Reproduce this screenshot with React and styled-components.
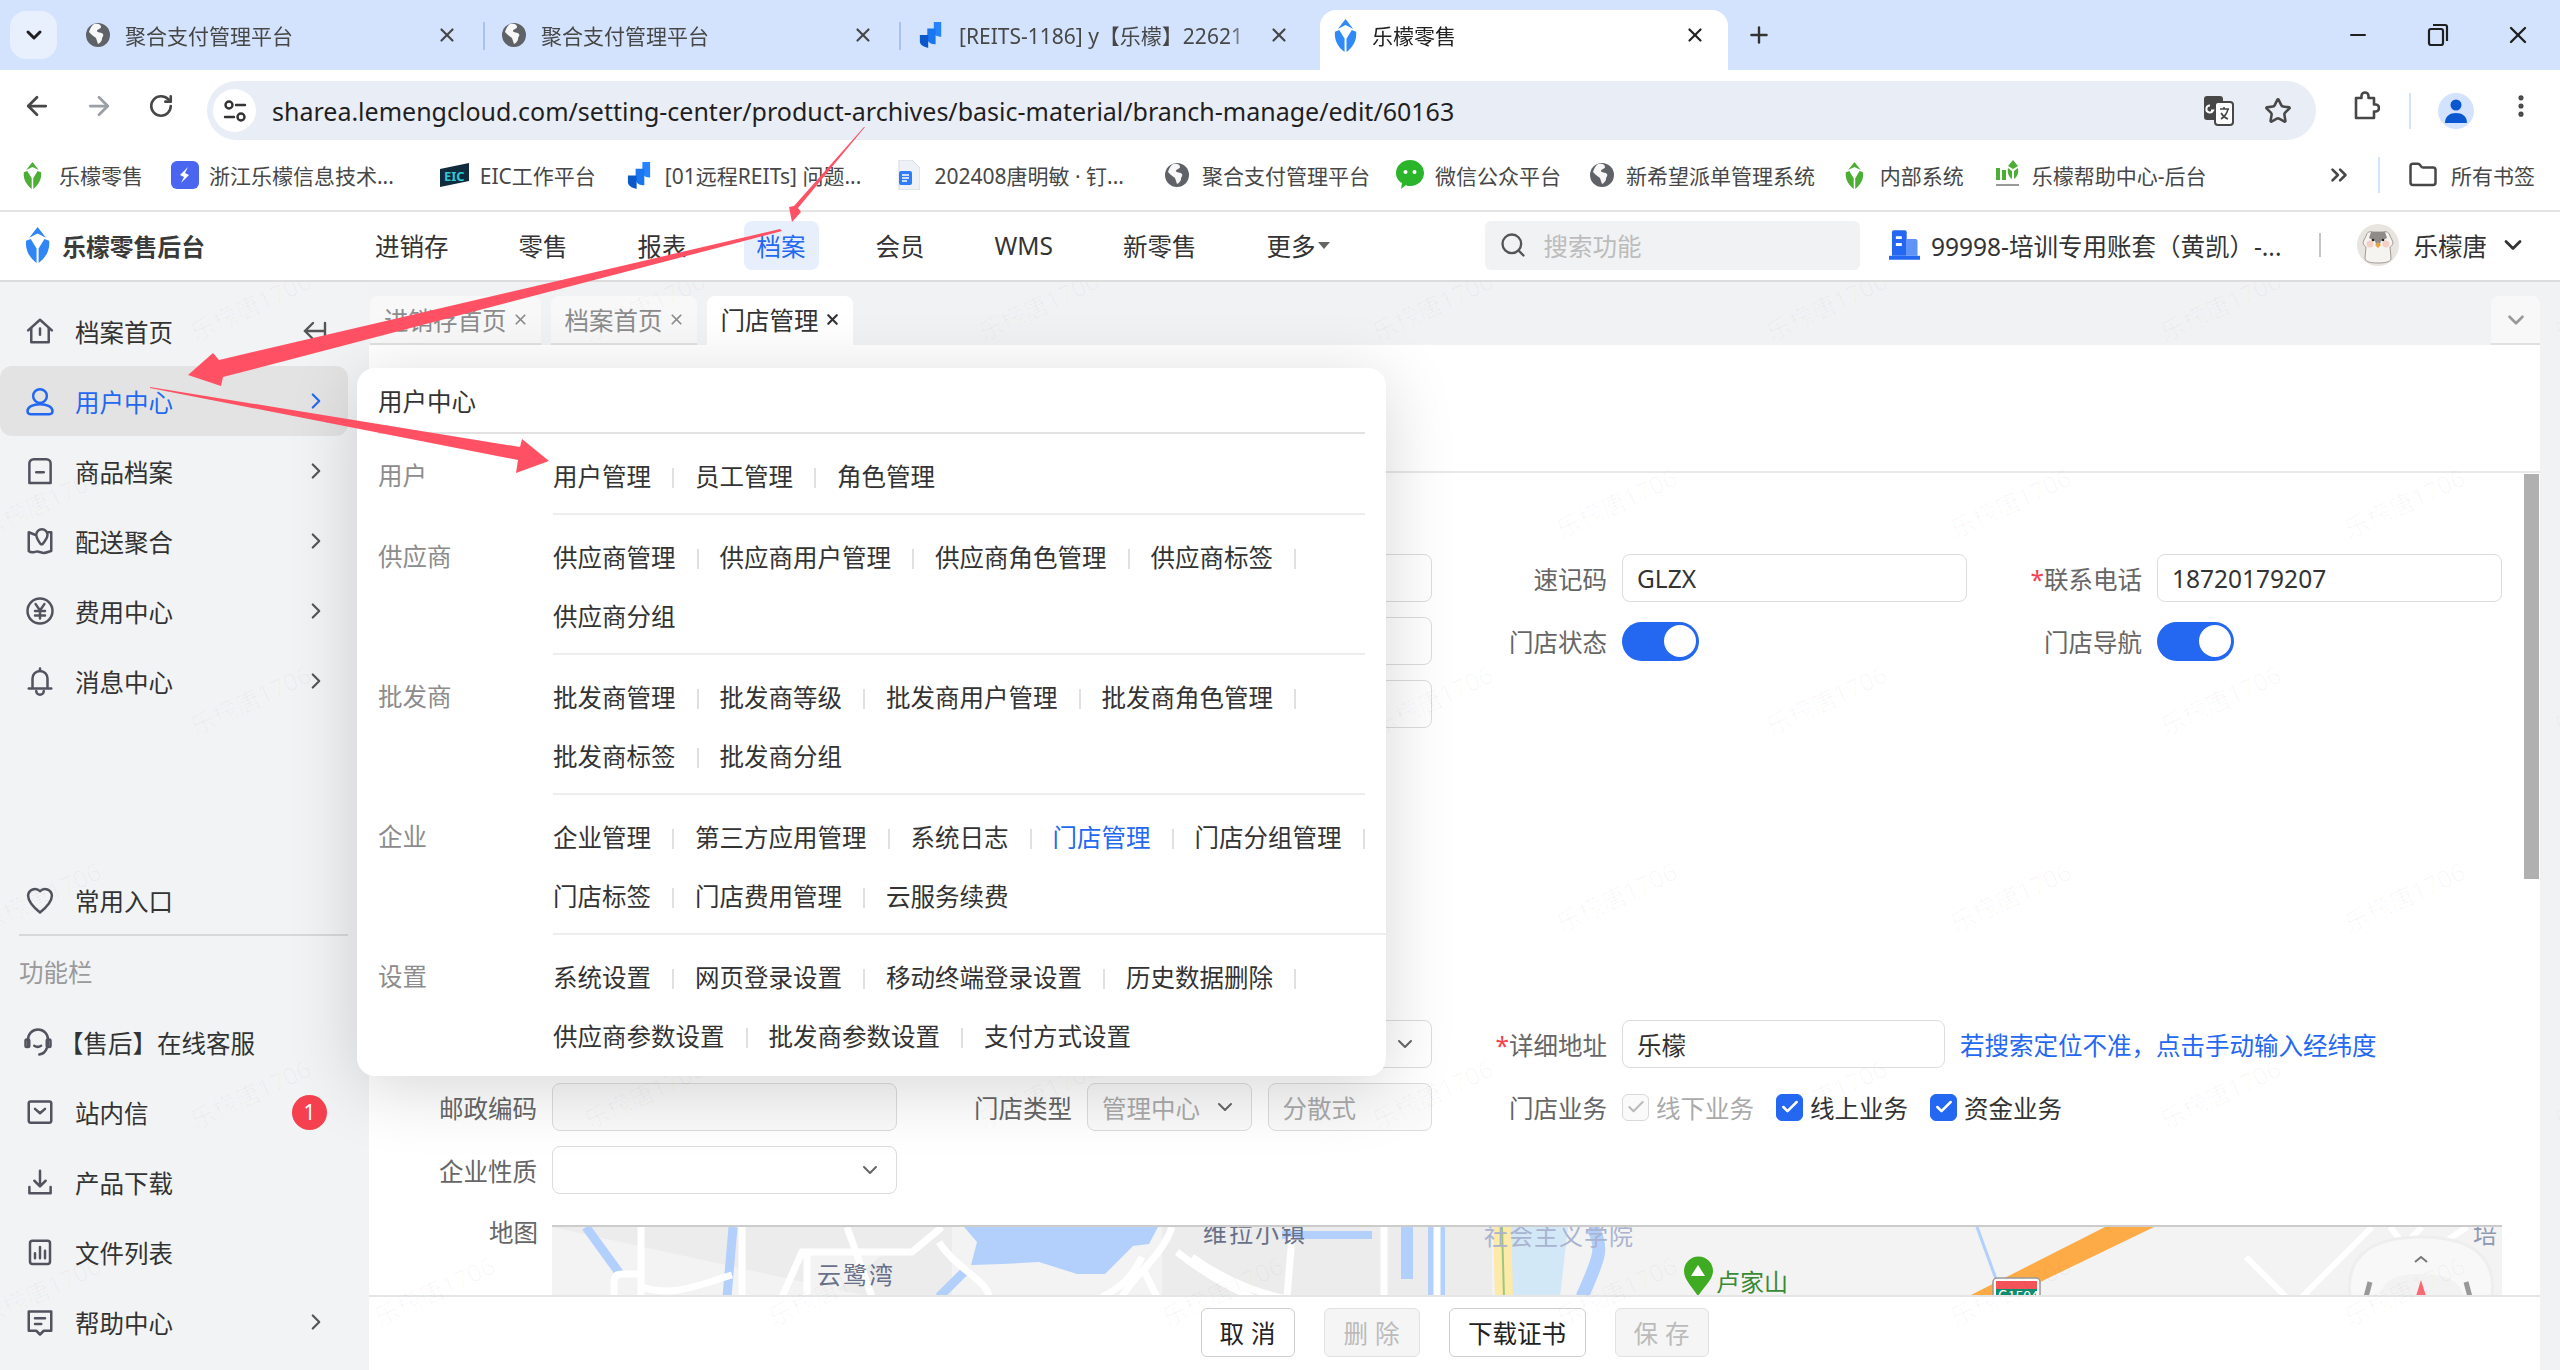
import React from 'react';
import styled, { createGlobalStyle } from 'styled-components';
import { ChevronDown, ChevronRight, ChevronsRight, Minus, Plus, RotateCw, Search, Star, X, ArrowLeft, ArrowRight, MoreVertical, Folder, Check } from 'lucide-react';

const BLUE = '#2468f2';

const GlobalStyle = createGlobalStyle`
  html, body { margin: 0; height: 100%; background: #f1f2f4; }
  body { font-family: "Noto Sans", "Noto Sans CJK SC", sans-serif; color: #333; overflow: hidden; }
  * { box-sizing: border-box; }
`;

const Page = styled.div`
  position: relative;
  display: flex;
  flex-direction: column;
  height: 1370px;
  overflow: hidden;
`;

/* browser chrome */
const TabStrip = styled.div`
  display: flex;
  align-items: flex-end;
  height: 70px;
  background: #d3e3fd;
  flex: none;
`;

const TabMenu = styled.div`
  display: flex;
  align-items: center;
  justify-content: center;
  align-self: flex-start;
  width: 47px;
  height: 48px;
  margin: 11px 15px 0 10px;
  border-radius: 16px;
  background: #e8f0fe;
  color: #1f1f1f;
`;

const BrowserTab = styled.div`
  position: relative;
  display: flex;
  align-items: center;
  gap: 15px;
  width: 408px;
  height: 60px;
  margin-right: 8px;
  padding: 0 22px 10px 14px;
  border-radius: 16px 16px 0 0;
  font-size: 21px;
  color: ${p => (p.$active ? '#222' : '#474747')};
  background: ${p => (p.$active ? '#fff' : 'transparent')};

  &::after {
    content: '';
    display: ${p => (p.$sep ? 'block' : 'none')};
    position: absolute;
    right: -5px;
    top: 12px;
    width: 2px;
    height: 28px;
    background: #a8c2ea;
  }
`;

const TabTitle = styled.span`
  flex: 1;
  min-width: 0;
  overflow: hidden;
  white-space: nowrap;
  mask-image: linear-gradient(to right, #000 92%, transparent);
`;

const NewTab = styled.div`
  display: flex;
  align-items: center;
  justify-content: center;
  align-self: center;
  width: 40px;
  margin-left: 3px;
  color: #333;
`;

const WindowControls = styled.div`
  display: flex;
  align-self: center;
  margin-left: auto;
  margin-right: 2px;
`;

const WindowButton = styled.div`
  display: flex;
  align-items: center;
  justify-content: center;
  width: 80px;
  color: #1f1f1f;
`;

const Toolbar = styled.div`
  display: flex;
  align-items: center;
  height: 71px;
  padding-left: 6px;
  background: #fff;
  flex: none;
`;

const ToolButton = styled.div`
  display: flex;
  align-items: center;
  justify-content: center;
  width: 62px;
  color: ${p => p.$color || '#474747'};
`;

const UrlBar = styled.div`
  display: flex;
  align-items: center;
  width: 2109px;
  height: 59px;
  margin: 10px 19px 0 15px;
  border-radius: 30px;
  background: #e9edf6;
`;

const SiteChip = styled.div`
  display: flex;
  align-items: center;
  justify-content: center;
  width: 43px;
  height: 43px;
  margin: 0 16px 0 6px;
  border-radius: 50%;
  background: #fff;
`;

const UrlText = styled.span`
  flex: 1;
  font-family: "Noto Sans", sans-serif;
  font-size: 25px;
  color: #1f1f1f;
  white-space: nowrap;
`;

const UrlIcons = styled.div`
  display: flex;
  align-items: center;
  gap: 30px;
  margin-right: 24px;
  color: #474747;
`;

const ToolSep = styled.div`
  width: 2px;
  height: 36px;
  margin: 10px 27px 0 12px;
  background: #d3e3fd;
`;

const BookmarkSep = styled(ToolSep)`
  margin: 0 28px 0 26px;
`;

const Profile = styled.div`
  display: flex;
  align-items: center;
  justify-content: center;
  width: 36px;
  height: 36px;
  margin: 10px 16px 0 0;
  border-radius: 50%;
  background: #d3e3fd;
`;

const Bookmarks = styled.div`
  display: flex;
  align-items: center;
  height: 71px;
  padding: 0 0 1px 23px;
  background: #fff;
  border-bottom: 2px solid #e3e3e3;
  flex: none;
`;

const Bookmark = styled.div`
  display: flex;
  align-items: center;
  gap: ${p => p.$gap || 12}px;
  margin-right: ${p => p.$mr || 30}px;
  font-size: 21px;
  color: #474747;
  white-space: nowrap;
`;

const BookmarkEnd = styled.div`
  display: flex;
  align-items: center;
  margin-left: auto;
  padding-right: 25px;
  font-size: 21px;
  color: #474747;
  white-space: nowrap;
`;

const FolderIcon = styled(Folder)`
  margin-right: 13px;
`;

/* app header */
const AppHeader = styled.header`
  display: flex;
  align-items: center;
  height: 70px;
  padding: 0 33px 2px 25px;
  background: #fff;
  border-bottom: 2px solid #dcdcdc;
  flex: none;
`;

const Brand = styled.div`
  display: flex;
  align-items: center;
  gap: 12px;
  width: 337px;
  font-size: 23.8px;
  font-weight: 700;
  color: #3a3a3a;
  white-space: nowrap;
`;

const Nav = styled.nav`
  display: flex;
  align-items: center;
  gap: 44px;
  flex: 1;
`;

const NavItem = styled.div`
  display: flex;
  align-items: center;
  height: 49px;
  padding: 0 13px;
  border-radius: 8px;
  font-size: 24.5px;
  color: ${p => (p.$active ? BLUE : '#333')};
  background: ${p => (p.$active ? '#e8effc' : 'transparent')};
  white-space: nowrap;
`;

const Caret = styled.span`
  width: 0;
  height: 0;
  margin: 0 0 0 3px;
  border-left: 6px solid transparent;
  border-right: 6px solid transparent;
  border-top: 7px solid #666;
`;

const SearchBox = styled.div`
  display: flex;
  align-items: center;
  gap: 17px;
  width: 375px;
  height: 49px;
  padding-left: 14px;
  border-radius: 6px;
  background: #f1f2f4;
  color: #bcbcbc;
  font-size: 24.5px;
  svg { color: #555; }
`;

const Account = styled.div`
  display: flex;
  align-items: center;
  gap: 11px;
  width: 393px;
  margin-left: 29px;
  font-size: 24.5px;
  color: #333;
  white-space: nowrap;
`;

const HeaderSep = styled.div`
  width: 2px;
  height: 24px;
  margin: 0 36px 0 37px;
  background: #c4c4c4;
`;

const UserName = styled.div`
  display: flex;
  align-items: center;
  gap: 15px;
  font-size: 24.5px;
  color: #333;
  svg:last-child { margin-left: -3px; }
`;

/* main */
const Main = styled.main`
  position: relative;
  display: flex;
  flex: 1;
  min-height: 0;
`;

const Sidebar = styled.aside`
  display: flex;
  flex-direction: column;
  width: 369px;
  padding: 14px 21px 13px 0;
  background: #f2f3f5;
  flex: none;
`;

const SideItem = styled.div`
  display: flex;
  align-items: center;
  gap: ${p => p.$gap ?? 20}px;
  height: 70px;
  padding: 0 19px 0 ${p => p.$pl ?? 25}px;
  border-radius: 12px;
  font-size: 24.5px;
  color: ${p => (p.$active ? BLUE : '#333')};
  background: ${p => (p.$active ? '#e3e3e4' : 'transparent')};
  white-space: nowrap;
  svg.lead { color: ${p => (p.$active ? BLUE : '#51535f')}; flex: none; }
`;

const SideText = styled.span`
  flex: 1;
`;

const SideMore = styled(ChevronRight)`
  color: ${p => (p.$active ? BLUE : '#555')};
`;

const Badge = styled.span`
  display: flex;
  align-items: center;
  justify-content: center;
  width: 35px;
  height: 35px;
  margin-right: 2px;
  border-radius: 50%;
  background: #f5404f;
  color: #fff;
  font-size: 21px;
`;

const SideBottom = styled.div`
  margin-top: auto;
`;

const SideDivider = styled.div`
  height: 2px;
  margin: -1px 0 0 19px;
  background: #d8d8da;
`;

const SideCaption = styled.div`
  display: flex;
  align-items: center;
  height: 71px;
  padding-left: 19px;
  font-size: 24.5px;
  color: #9a9a9a;
`;

const Content = styled.div`
  display: flex;
  flex-direction: column;
  flex: 1;
  min-width: 0;
`;

const TabsBar = styled.div`
  display: flex;
  align-items: flex-end;
  gap: 10px;
  height: 63px;
  padding-left: 1px;
  padding-right: 20px;
  background: #f1f2f4;
  flex: none;
`;

const PageTab = styled.div`
  display: flex;
  align-items: center;
  gap: 5px;
  height: 49px;
  padding: 0 12px 0 14px;
  border-radius: 8px 8px 0 0;
  font-size: 24.5px;
  color: ${p => (p.$active ? '#333' : '#8c8c8c')};
  background: ${p => (p.$active ? '#fff' : '#f8f8f9')};
  border-bottom: 2px solid ${p => (p.$active ? '#fff' : '#e0e0e0')};
  white-space: nowrap;
`;

const TabFold = styled.div`
  display: flex;
  align-items: center;
  justify-content: center;
  width: 49px;
  height: 49px;
  margin-left: auto;
  border-radius: 8px 8px 0 0;
  background: #f8f8f9;
  border-bottom: 2px solid #e0e0e0;
  color: #999;
`;

const Panel = styled.section`
  position: relative;
  display: flex;
  flex-direction: column;
  width: 2171px;
  flex: 1;
  min-height: 0;
  background: #fff;
`;

const PanelHead = styled.div`
  height: 128px;
  border-bottom: 2px solid #e8e8e8;
  flex: none;
`;

const PanelBody = styled.div`
  flex: 1;
  min-height: 0;
  overflow: hidden;
  padding: 81px 38px 0 0;
`;

const ScrollThumb = styled.div`
  position: absolute;
  right: 1px;
  top: 129px;
  width: 15px;
  height: 405px;
  background: #b0b0b0;
`;

const FormGrid = styled.div`
  display: grid;
  grid-template-columns: 528px 535px 535px 535px;
  grid-auto-rows: 48px;
  row-gap: 15px;
  margin-bottom: ${p => p.$mb || 0}px;
`;

const Field = styled.div`
  display: grid;
  grid-template-columns: ${p => p.$cols || '1fr 345px'};
  column-gap: 15px;
  align-items: center;
  grid-column: ${p => p.$col};
`;

const Label = styled.label`
  font-size: 24.5px;
  text-align: right;
  color: #666;
  white-space: nowrap;
`;

const Req = styled.span`
  color: #f5404f;
`;

const Input = styled.div`
  display: flex;
  align-items: center;
  justify-content: space-between;
  min-width: 0;
  height: 48px;
  padding: 0 14px;
  border: 1.5px solid #dcdcdc;
  border-radius: 8px;
  font-size: 24.5px;
  color: ${p => (p.$disabled ? '#aaa' : '#333')};
  background: ${p => (p.$disabled ? '#fafafa' : '#fff')};
  white-space: nowrap;
  svg { color: #666; flex: none; }
`;

const Pair = styled.div`
  display: flex;
  gap: 16px;
  ${Input} { flex: 1; }
`;

const Switch = styled.div`
  display: flex;
  justify-content: flex-end;
  align-items: center;
  width: 77px;
  height: 39px;
  padding-right: 3px;
  border-radius: 20px;
  background: ${BLUE};
  &::after {
    content: '';
    width: 32px;
    height: 32px;
    border-radius: 50%;
    background: #fff;
  }
`;

const Hint = styled.a`
  font-size: 24.5px;
  color: ${BLUE};
  white-space: nowrap;
`;

const Checks = styled.div`
  display: flex;
  align-items: center;
  gap: 22px;
`;

const CheckItem = styled.div`
  display: flex;
  align-items: center;
  gap: 7px;
  font-size: 24.5px;
  color: ${p => (p.$disabled ? '#aaa' : '#333')};
`;

const CheckBox = styled.span`
  display: flex;
  align-items: center;
  justify-content: center;
  width: 27px;
  height: 27px;
  border-radius: 6px;
  color: ${p => (p.$disabled ? '#bbb' : '#fff')};
  background: ${p => (p.$disabled ? '#fafafa' : BLUE)};
  border: 1.5px solid ${p => (p.$disabled ? '#d9d9d9' : BLUE)};
`;

const MapRow = styled.div`
  display: grid;
  grid-template-columns: 169px 1950px;
  column-gap: 14px;
  margin-top: 31px;
  height: 80px;
`;

const MapLabel = styled(Label)`
  line-height: 16px;
`;

const MapBox = styled.div`
  height: 72px;
  border-top: 2px solid #ccc;
  background: #f3f3f3;
  overflow: hidden;
`;

const Footer = styled.footer`
  display: flex;
  justify-content: center;
  align-items: flex-start;
  gap: 29px;
  height: 75px;
  padding-top: 11px;
  border-top: 2px solid #e5e5e5;
  background: #fff;
  flex: none;
`;

const Btn = styled.button`
  width: ${p => p.$w}px;
  height: 49px;
  padding: 0;
  border: 1.5px solid ${p => (p.disabled ? '#e2e2e2' : '#cfcfcf')};
  border-radius: 6px;
  font: inherit;
  font-size: 24.5px;
  letter-spacing: ${p => (p.$wide ? '7px' : '0')};
  text-indent: ${p => (p.$wide ? '7px' : '0')};
  color: ${p => (p.disabled ? '#bbb' : '#222')};
  background: ${p => (p.disabled ? '#f5f5f5' : '#fff')};
`;

/* hover menu */
const Flyout = styled.div`
  position: absolute;
  z-index: 3;
  left: 357px;
  top: 86px;
  width: 1029px;
  height: 708px;
  padding: 0 21px;
  border-radius: 18px;
  background: #fff;
  box-shadow: 0 12px 70px rgba(0, 0, 0, 0.16);
`;

const FlyoutTitle = styled.div`
  display: flex;
  align-items: center;
  height: 66px;
  border-bottom: 2px solid #e2e2e2;
  font-size: 24.5px;
  color: #333;
`;

const Group = styled.div`
  display: grid;
  grid-template-columns: 175px 1fr;
`;

const GroupName = styled.div`
  height: 59px;
  margin-top: 12px;
  line-height: 59px;
  font-size: 24.5px;
  color: #8c8c8c;
`;

const GroupBody = styled.div`
  padding: 12px 0 8px;
  border-bottom: ${p => (p.$last ? 'none' : '2px solid #eeeeee')};
`;

const MenuRow = styled.div`
  display: flex;
  align-items: center;
  height: 59px;
`;

const MenuLink = styled.span`
  font-size: 24.5px;
  color: ${p => (p.$active ? BLUE : '#333')};
  white-space: nowrap;
  &::after {
    content: '';
    display: ${p => (p.$sep ? 'inline-block' : 'none')};
    width: 2px;
    height: 20px;
    margin: 0 21px;
    vertical-align: -2px;
    background: #e0e0e0;
  }
`;

/* watermark + annotations lie over the page */
const WatermarkLayer = styled.div`
  position: absolute;
  inset: 0;
  z-index: 2;
  overflow: hidden;
  pointer-events: none;
`;

const Watermark = styled.span`
  position: absolute;
  font-size: 24.5px;
  color: rgba(0, 0, 0, 0.028);
  transform: translate(-50%, -50%) rotate(-25deg);
  white-space: nowrap;
`;

const Annotations = styled.svg`
  position: absolute;
  left: 0;
  top: 0;
  z-index: 5;
  pointer-events: none;
`;

const Glyph = styled.svg.attrs(p => ({
  viewBox: '0 0 24 24',
  fill: 'none',
  stroke: 'currentColor',
  strokeWidth: p.$sw || 2,
  strokeLinecap: 'round',
  strokeLinejoin: 'round',
  width: p.$size || 30,
  height: p.$size || 30,
  className: 'lead',
}))``;

const sideIcons = {
  home: <><path d="M2.5 11.5 12 3l9.5 8.5" /><path d="M5 9.5V21h14V9.5" /><path d="M12 10v5" /></>,
  user: <><circle cx="12" cy="8" r="5.5" /><path d="M2 20c0-3 4-5.5 10-5.5S22 17 22 20c0 1.5-1 2.5-2.5 2.5h-15C3 22.500 2 21.500 2 20z" /></>,
  goods: <><path d="M7 2.500h10A3.500 3.500 0 0 1 20.500 6v15.500h-17V6A3.500 3.500 0 0 1 7 2.500z" /><path d="M9 13h6" /></>,
  dist: <><path d="M8 7 3 5v15c2 2 4 1 6 .5s4 1 6 1 4-1 6-1.500V5h-3" /><path d="M12.500 14.500C10 11 9 9.500 9 7a4.500 4.500 0 0 1 9 0c0 2.500-1.500 4.500-4 7.500z" /></>,
  fee: <><circle cx="12" cy="12" r="10" /><path d="m8.500 6.500 3.500 5 3.500-5M8 12h8M8 15.500h8M12 12v6" /></>,
  bell: <><path d="M6 17V10a6 6 0 0 1 12 0v7" /><path d="M3 18h18" /><path d="M12 2v2" /><path d="M9 20a3 3 0 0 0 6 0" /></>,
  heart: <path d="M12 22C6 17 2.500 13 2.500 8.500A5.500 5.500 0 0 1 12 5a5.500 5.500 0 0 1 9.500 3.500C21.500 13 18 17 12 22z" />,
  service: <><path d="M4 15V10a8 8 0 0 1 16 0v5" /><rect x="2" y="10" width="3" height="6" rx="1" /><rect x="19" y="10" width="3" height="6" rx="1" /><path d="M19 17c-1 3-3 4.500-6 5" /><path d="M9 15c1.500 1 4 1 5.500 0" /></>,
  mail: <><rect x="3" y="3.500" width="18" height="17" rx="1.500" /><path d="m8 9.500 4 3.500 4-3.500" /></>,
  download: <><path d="M12 3v12M7.500 11l4.500 4.500 4.500-4.500" /><path d="M3.500 16v5h17v-5" /></>,
  files: <><rect x="4" y="3" width="16" height="18.500" rx="2" /><path d="M8 17v-4M12 17V8M16 17v-6" /></>,
  help: <><path d="M3 3.500h18V19h-6l-3 3-3-3H3z" /><path d="M8 9h8M8 13.500h5" /></>,
};

const Leaf = ({ color, size = 24 }) => (
  <svg width={size * 0.7} height={size} viewBox="0 0 24 30" fill={color} preserveAspectRatio="none">
    <path d="M12 0 20 9 12 5.500 4 9z" />
    <path d="M1 11.500 5.500 10 11 18v12C5 26 0 20 1 11.500z" />
    <path d="M23 11.500 18.500 10 13 18v12c6-4 11-10 10-18.500z" />
  </svg>
);

const Globe = () => (
  <svg width="24" height="24" viewBox="0 0 24 24">
    <circle cx="12" cy="12" r="12" fill="#5f6368" />
    <path d="M8 1c5-1 7 1 7 3s-4 2-4 4 5 1 6 3-1 3-1 5-3 5-4 5l-2-6-4-3-3-3c1-3 2-6 5-8z" fill="#fff" opacity=".95" />
  </svg>
);

const JiraMark = ({ size = 28 }) => (
  <svg width={size} height={size} viewBox="0 0 28 28" fill="#2684ff">
    <path d="M17 0h8v16c-3 0-8-1-8-6z" />
    <path d="M10 7h9v17c-4 0-9-1-9-7z" fill="#1976f0" />
    <path d="M2 14h9v14c-4-1-9-3-9-7z" fill="#0a58ca" />
  </svg>
);

const ExtensionIcon = () => (
  <svg width="28" height="30" viewBox="0 0 28 30" fill="none" stroke="currentColor" strokeWidth="2.600" strokeLinejoin="round">
    <path d="M4 7h5.500V5a3.500 3.500 0 0 1 7 0v2H22v6.500h1.500a3.500 3.500 0 0 1 0 7H22V27H4z" />
  </svg>
);

const AccountIcon = () => (
  <svg width="32" height="30" viewBox="0 0 32 30">
    <path d="M3 2a2 2 0 0 1 2-2h11a2 2 0 0 1 2 2v24H3z" fill={BLUE} />
    <path d="M18 9h9a2 2 0 0 1 2 2v15H18z" fill="#5f93f7" />
    <path d="M7 6h6v3H7zM7 13h6v3H7z" fill="#fff" />
    <path d="M0 26h32v4H0z" fill={BLUE} />
  </svg>
);

const Hamster = () => (
  <svg width="42" height="42" viewBox="0 0 42 42">
    <circle cx="21" cy="21" r="21" fill="#e8e4df" />
    <path d="M9 12a5 5 0 0 1 7-4h10a5 5 0 0 1 7 4l2 4c2 3 0 6-2 7l1 11c0 3-3 5-13 5S8 37 8 34l1-11c-2-1-4-4-2-7z" fill="#f6f4f0" stroke="#8a8580" strokeWidth=".8" />
    <path d="M14 8h14l2 6-6 3-1 3h-4l-1-3-6-3z" fill="#8e8b88" />
    <circle cx="13" cy="20" r="3.500" fill="#f6cfc4" />
    <circle cx="29" cy="20" r="3.500" fill="#f6cfc4" />
    <circle cx="16" cy="16" r="1.300" fill="#222" />
    <circle cx="26" cy="16" r="1.300" fill="#222" />
    <path d="m21 18 3 3-3 3-3-3z" fill="#e9a63c" />
  </svg>
);

const MapDrawing = () => (
  <svg width="1950" height="70" viewBox="0 0 1950 70" fontFamily='"Noto Sans CJK SC", sans-serif'>
    <path d="M0 0h400v70H320zM610 0h330v70H610z" fill="#ececec" />
    <path d="M255 25h80l-60 45h-25z" fill="#f3f3f3" />
    <path d="M34 0 68 47M181 0l-6 70M412 45l-25 25" stroke="#b3d0fc" strokeWidth="9" fill="none" />
    <path d="M412 0l13 15-6 23 31-1 37-2 38 12 28 0 28-28 16-2 9-17z" fill="#b3d0fc" />
    <path d="M959 0h57l-8 70h-49z" fill="#d3e8f7" />
    <path d="M1040 0c12 20 8 30-10 70" stroke="#b3d0fc" strokeWidth="13" fill="none" />
    <path d="M1425 0l19 52" stroke="#b3d0fc" strokeWidth="3" fill="none" />
    <path d="M880 0h9v70h-9z M730 8h90" fill="none" stroke="#b3d0fc" strokeWidth="8" />
    <path d="M855 0v52" stroke="#b3d0fc" strokeWidth="12" />
    <g fill="none" stroke="#fff" strokeWidth="7">
      <path d="M89 0v70M62 70V55q0-8 8-8h20M90 60c30 10 50 0 90-12M190 0v70M230 70l20-45h110L390 0" />
      <path d="M255 25V70M295 0l25 70M387 15c15 25 50 40 50 55M620 0c-10 30-40 50-50 70M590 30c-10 20-20 30-40 40" />
      <path d="M625 25c50 40 120 70 180 72M640 30c70 50 140 55 300 55M740 10l-5 60M832 0v70M885 0v70M590 40l15 30" />
    </g>
    <path d="M941 0h18l2 70h-18z" fill="#fde9a8" />
    <path d="M950 0l2 70" stroke="#9bc77f" strokeWidth="2" />
    <path d="M1553 0h49l-145 70h-42z" fill="#fcab47" />
    <g fill="none" stroke="#fff" strokeWidth="6">
      <path d="M1820 0c-30 30-50 50-70 70M1838 0l20 25M1870 0l-20 20M1915 0l-30 20M1694 30l40 40" />
    </g>
    <path d="M1798 70c-5-40 20-60 71-60s76 20 71 60z" fill="#f8f8f8" stroke="#eee" strokeWidth="3" />
    <path d="M1827 70c4-16 14-23 42-23s38 7 43 23z" fill="#f2f2f2" />
    <path d="M1869 53l-5 16h10z" fill="#f96a72" />
    <path d="M1863 35l6-5 6 5" fill="none" stroke="#777" strokeWidth="2" />
    <path d="M1818 55l-4 15M1914 55l4 15" stroke="#999" strokeWidth="5" />
    <rect x="1441" y="51" width="47" height="40" rx="4" fill="#fff" stroke="#999" strokeWidth="1.500" />
    <rect x="1444" y="54" width="41" height="8" fill="#f4535a" />
    <rect x="1444" y="62" width="41" height="14" fill="#0f8f6f" />
    <text x="1446" y="74" fontSize="14" fill="#fff">G1504</text>
    <path d="M1146 69c-7-10-14-17-14-25a14.500 14.500 0 0 1 29 0c0 8-8 15-15 25z" fill="#3fab22" />
    <path d="M1139 49l7-11 7 11z" fill="#fff" />
    <text x="1164" y="64" fontSize="24" fill="#3a8a33">卢家山</text>
    <text x="265" y="57" fontSize="24" letterSpacing="2" fill="#68708a">云鹭湾</text>
    <text x="651" y="15" fontSize="24" letterSpacing="2" fill="#68708a">维拉小镇</text>
    <text x="932" y="18" fontSize="24" letterSpacing="1" fill="#a9b3cf">社会主义学院</text>
    <text x="1921" y="16" fontSize="24" fill="#8f98b2">培</text>
  </svg>
);

const menuGroups = [
  { name: '用户', rows: [['用户管理', '员工管理', '角色管理']] },
  { name: '供应商', rows: [['供应商管理', '供应商用户管理', '供应商角色管理', '供应商标签'], ['供应商分组']] },
  { name: '批发商', rows: [['批发商管理', '批发商等级', '批发商用户管理', '批发商角色管理'], ['批发商标签', '批发商分组']] },
  { name: '企业', rows: [['企业管理', '第三方应用管理', '系统日志', '门店管理', '门店分组管理'], ['门店标签', '门店费用管理', '云服务续费']] },
  { name: '设置', rows: [['系统设置', '网页登录设置', '移动终端登录设置', '历史数据删除'], ['供应商参数设置', '批发商参数设置', '支付方式设置']] },
];

const navItems = ['进销存', '零售', '报表', '档案', '会员', 'WMS', '新零售'];

const sideTop = [
  { icon: 'user', text: '用户中心', active: true },
  { icon: 'goods', text: '商品档案' },
  { icon: 'dist', text: '配送聚合' },
  { icon: 'fee', text: '费用中心' },
  { icon: 'bell', text: '消息中心' },
];

const watermarkRows = [23, 220, 417, 614, 811, 1008];

function App() {
  return (
    <Page>
      <GlobalStyle />
      <TabStrip>
        <TabMenu><ChevronDown size={24} strokeWidth={3} /></TabMenu>
        <BrowserTab $sep><Globe /><TabTitle>聚合支付管理平台</TabTitle><X size={22} strokeWidth={2.4} /></BrowserTab>
        <BrowserTab $sep><Globe /><TabTitle>聚合支付管理平台</TabTitle><X size={22} strokeWidth={2.4} /></BrowserTab>
        <BrowserTab><JiraMark size={26} /><TabTitle>[REITS-1186] y【乐檬】22621</TabTitle><X size={22} strokeWidth={2.4} /></BrowserTab>
        <BrowserTab $active><Leaf color="#2f8af5" size={33} /><TabTitle>乐檬零售</TabTitle><X size={22} strokeWidth={2.4} /></BrowserTab>
        <NewTab><Plus size={26} strokeWidth={2.2} /></NewTab>
        <WindowControls>
          <WindowButton><Minus size={24} /></WindowButton>
          <WindowButton>
            <svg width="22" height="24" viewBox="0 0 22 24" fill="none" stroke="currentColor" strokeWidth="2.2">
              <rect x="2" y="6" width="14" height="16" rx="2" />
              <path d="M6 2h12a2 2 0 0 1 2 2v14" />
            </svg>
          </WindowButton>
          <WindowButton><X size={28} strokeWidth={2} /></WindowButton>
        </WindowControls>
      </TabStrip>

      <Toolbar>
        <ToolButton><ArrowLeft size={30} strokeWidth={2.2} /></ToolButton>
        <ToolButton $color="#9aa0a6"><ArrowRight size={30} strokeWidth={2.2} /></ToolButton>
        <ToolButton><RotateCw size={26} strokeWidth={2.4} /></ToolButton>
        <UrlBar>
          <SiteChip>
            <svg width="26" height="26" viewBox="0 0 26 26" fill="none" stroke="#333" strokeWidth="2.4" strokeLinecap="round">
              <circle cx="7" cy="7" r="3.500" />
              <path d="M14 7h9M3 19h9" />
              <circle cx="19" cy="19" r="3.500" />
            </svg>
          </SiteChip>
          <UrlText>sharea.lemengcloud.com/setting-center/product-archives/basic-material/branch-manage/edit/60163</UrlText>
          <UrlIcons>
            <svg width="30" height="30" viewBox="0 0 30 30">
              <rect x="0" y="0" width="19" height="24" rx="3" fill="#474747" />
              <rect x="11" y="6" width="18" height="23" rx="3" fill="#fff" stroke="#474747" strokeWidth="2" />
              <path d="M6 9.500a3.500 3.500 0 1 0 3 5H7" fill="none" stroke="#fff" strokeWidth="2" />
              <path d="M16 13h9M20 11v2M24 13c-1 5-4 8-7 10M17 17c2 3 4 5 7 6" fill="none" stroke="#474747" strokeWidth="1.600" />
            </svg>
            <Star size={28} strokeWidth={2.2} />
          </UrlIcons>
        </UrlBar>
        <ToolButton><ExtensionIcon /></ToolButton>
        <ToolSep />
        <Profile>
          <svg width="24" height="26" viewBox="0 0 24 26" fill="#0b57d0">
            <circle cx="12" cy="7" r="5.500" />
            <path d="M1 25c0-7 5-10 11-10s11 3 11 10z" />
          </svg>
        </Profile>
        <ToolButton><MoreVertical size={28} strokeWidth={2.4} /></ToolButton>
      </Toolbar>

      <Bookmarks>
        <Bookmark $gap={17} $mr={28}><Leaf color="#4cae34" size={27} /><span>乐檬零售</span></Bookmark>
        <Bookmark $gap={10} $mr={46}>
          <svg width="28" height="28" viewBox="0 0 28 28">
            <rect width="28" height="28" rx="6" fill="#4a66f0" />
            <path d="M17 6l-8 8 4 2-3 6 8-8-4-2z" fill="#fff" />
          </svg>
          <span>浙江乐檬信息技术...</span>
        </Bookmark>
        <Bookmark $gap={11} $mr={30}>
          <svg width="29" height="24" viewBox="0 0 29 24">
            <path d="M0 6 29 0v18L0 24z" fill="#0f2b3d" />
            <text x="4" y="18" fontSize="13" fontWeight="700" fill="#31c6d4">EIC</text>
          </svg>
          <span>EIC工作平台</span>
        </Bookmark>
        <Bookmark $gap={12} $mr={36}><JiraMark size={27} /><span>[01远程REITs] 问题...</span></Bookmark>
        <Bookmark $gap={14} $mr={41}>
          <svg width="23" height="30" viewBox="0 0 23 30">
            <path d="M2 0h13l8 8v22H2z" fill="#eef1f6" stroke="#d5d9e2" />
            <rect x="2" y="11" width="13" height="14" rx="2" fill="#2f7df6" />
            <path d="M5 15h7M5 18h7M5 21h5" stroke="#fff" strokeWidth="1.500" />
          </svg>
          <span>202408唐明敏 · 钉...</span>
        </Bookmark>
        <Bookmark $gap={13} $mr={26}><Globe /><span>聚合支付管理平台</span></Bookmark>
        <Bookmark $gap={11} $mr={29}>
          <svg width="28" height="30" viewBox="0 0 28 30">
            <path d="M14 0c8 0 14 6 14 13s-6 13-14 13c-2 0-3 0-4-1l-5 4 1-6C2 21 0 17 0 13 0 6 6 0 14 0z" fill="#2bb52b" />
            <circle cx="9.500" cy="12" r="2" fill="#fff" />
            <circle cx="18.500" cy="12" r="2" fill="#fff" />
          </svg>
          <span>微信公众平台</span>
        </Bookmark>
        <Bookmark $gap={12} $mr={30}><Globe /><span>新希望派单管理系统</span></Bookmark>
        <Bookmark $gap={16} $mr={31}><Leaf color="#4cae34" size={27} /><span>内部系统</span></Bookmark>
        <Bookmark $gap={12} $mr={0}>
          <svg width="25" height="30" viewBox="0 0 25 30" fill="#4cae34">
            <path d="M1 8h4v12H1zM7 10h4v10H7z" />
            <path d="M18 0l5 6-5 3-5-3zM13 8l4 3v8c-3-2-5-6-4-11zM23 8l-4 3v8c3-2 5-6 4-11z" />
            <path d="M1 24h23v2H1z" fill="#999" />
          </svg>
          <span>乐檬帮助中心-后台</span>
        </Bookmark>
        <BookmarkEnd>
          <ChevronsRight size={26} strokeWidth={2.4} />
          <BookmarkSep />
          <FolderIcon size={30} strokeWidth={2} />
          <span>所有书签</span>
        </BookmarkEnd>
      </Bookmarks>

      <AppHeader>
        <Brand><Leaf color="#2f86f4" size={36} /><span>乐檬零售后台</span></Brand>
        <Nav>
          {navItems.map(n => <NavItem key={n} $active={n === '档案'}>{n}</NavItem>)}
          <NavItem>更多<Caret /></NavItem>
        </Nav>
        <SearchBox><Search size={28} strokeWidth={2} /><span>搜索功能</span></SearchBox>
        <Account><AccountIcon /><span>99998-培训专用账套（黄凯）-...</span></Account>
        <HeaderSep />
        <UserName><Hamster /><span>乐檬唐</span><ChevronDown size={28} strokeWidth={2.4} /></UserName>
      </AppHeader>

      <Main>
        <Sidebar>
          <SideItem>
            <Glyph>{sideIcons.home}</Glyph>
            <SideText>档案首页</SideText>
            <svg width="26" height="22" viewBox="0 0 26 22" fill="none" stroke="#555" strokeWidth="2.400" strokeLinecap="round">
              <path d="M10 3 2 11l8 8M2 11h19M22 3v16" />
            </svg>
          </SideItem>
          {sideTop.map(s => (
            <SideItem key={s.text} $active={s.active}>
              <Glyph>{sideIcons[s.icon]}</Glyph>
              <SideText>{s.text}</SideText>
              <SideMore size={26} strokeWidth={2} $active={s.active} />
            </SideItem>
          ))}
          <SideBottom>
            <SideItem><Glyph>{sideIcons.heart}</Glyph><SideText>常用入口</SideText></SideItem>
            <SideDivider />
            <SideCaption>功能栏</SideCaption>
            <SideItem $pl={23} $gap={6}><Glyph>{sideIcons.service}</Glyph><SideText>【售后】在线客服</SideText></SideItem>
            <SideItem>
              <Glyph>{sideIcons.mail}</Glyph>
              <SideText>站内信</SideText>
              <Badge>1</Badge>
            </SideItem>
            <SideItem><Glyph>{sideIcons.download}</Glyph><SideText>产品下载</SideText></SideItem>
            <SideItem><Glyph>{sideIcons.files}</Glyph><SideText>文件列表</SideText></SideItem>
            <SideItem>
              <Glyph>{sideIcons.help}</Glyph>
              <SideText>帮助中心</SideText>
              <SideMore size={26} strokeWidth={2} />
            </SideItem>
          </SideBottom>
        </Sidebar>

        <Content>
          <TabsBar>
            <PageTab>进销存首页<X size={17} strokeWidth={2.4} /></PageTab>
            <PageTab>档案首页<X size={17} strokeWidth={2.4} /></PageTab>
            <PageTab $active>门店管理<X size={17} strokeWidth={3} /></PageTab>
            <TabFold><ChevronDown size={26} strokeWidth={2.4} /></TabFold>
          </TabsBar>
          <Panel>
            <PanelHead />
            <ScrollThumb />
            <PanelBody>
              <FormGrid $mb={292}>
                <Field $col="2"><span /><Input /></Field>
                <Field $col="3"><Label>速记码</Label><Input>GLZX</Input></Field>
                <Field $col="4"><Label><Req>*</Req>联系电话</Label><Input>18720179207</Input></Field>
                <Field $col="2"><span /><Input /></Field>
                <Field $col="3"><Label>门店状态</Label><Switch /></Field>
                <Field $col="4"><Label>门店导航</Label><Switch /></Field>
                <Field $col="2"><span /><Input /></Field>
              </FormGrid>
              <FormGrid>
                <Field $col="2"><span /><Input><span /><ChevronDown size={24} strokeWidth={2} /></Input></Field>
                <Field $col="3 / span 2" $cols="175px 323px auto">
                  <Label><Req>*</Req>详细地址</Label>
                  <Input>乐檬</Input>
                  <Hint>若搜索定位不准，点击手动输入经纬度</Hint>
                </Field>
                <Field $col="1"><Label>邮政编码</Label><Input $disabled /></Field>
                <Field $col="2">
                  <Label>门店类型</Label>
                  <Pair>
                    <Input $disabled>管理中心<ChevronDown size={24} strokeWidth={2} /></Input>
                    <Input $disabled>分散式</Input>
                  </Pair>
                </Field>
                <Field $col="3 / span 2" $cols="175px 1fr">
                  <Label>门店业务</Label>
                  <Checks>
                    <CheckItem $disabled><CheckBox $disabled><Check size={20} strokeWidth={2.5} /></CheckBox>线下业务</CheckItem>
                    <CheckItem><CheckBox><Check size={20} strokeWidth={3} /></CheckBox>线上业务</CheckItem>
                    <CheckItem><CheckBox><Check size={20} strokeWidth={3} /></CheckBox>资金业务</CheckItem>
                  </Checks>
                </Field>
                <Field $col="1"><Label>企业性质</Label><Input><span /><ChevronDown size={24} strokeWidth={2} /></Input></Field>
              </FormGrid>
              <MapRow>
                <MapLabel>地图</MapLabel>
                <MapBox><MapDrawing /></MapBox>
              </MapRow>
            </PanelBody>
            <Footer>
              <Btn $w={94} $wide>取消</Btn>
              <Btn $w={96} $wide disabled>删除</Btn>
              <Btn $w={137}>下载证书</Btn>
              <Btn $w={94} $wide disabled>保存</Btn>
            </Footer>
          </Panel>
        </Content>

        <WatermarkLayer>
          {watermarkRows.flatMap((top, r) =>
            Array.from({ length: 7 }, (_, c) => (
              <Watermark key={`${r}-${c}`} style={{ top, left: (r % 2 ? 40 : 250) + c * 394 }}>乐檬唐1706</Watermark>
            ))
          )}
        </WatermarkLayer>

        <Flyout>
          <FlyoutTitle>用户中心</FlyoutTitle>
          {menuGroups.map((g, gi) => (
            <Group key={g.name}>
              <GroupName>{g.name}</GroupName>
              <GroupBody $last={gi === menuGroups.length - 1}>
                {g.rows.map((row, ri) => (
                  <MenuRow key={ri}>
                    {row.map((item, ii) => {
                      const isLastOfGroup = ri === g.rows.length - 1 && ii === row.length - 1;
                      return (
                        <MenuLink key={item} $sep={!isLastOfGroup} $active={item === '门店管理'}>{item}</MenuLink>
                      );
                    })}
                  </MenuRow>
                ))}
              </GroupBody>
            </Group>
          ))}
        </Flyout>
      </Main>

      <Annotations width="2560" height="1370" viewBox="0 0 2560 1370" fill="#ff5163">
        <polygon points="780,229 219,360 213,353 188,375 221,386 223,377 782,231" />
        <polygon points="150,387 520,447 522,439 549,461 516,473 518,460 150,388" />
        <polygon points="865,127 798,208 801,212 792,222 789,207 794,206 864,127" />
      </Annotations>
    </Page>
  );
}

export default App;
